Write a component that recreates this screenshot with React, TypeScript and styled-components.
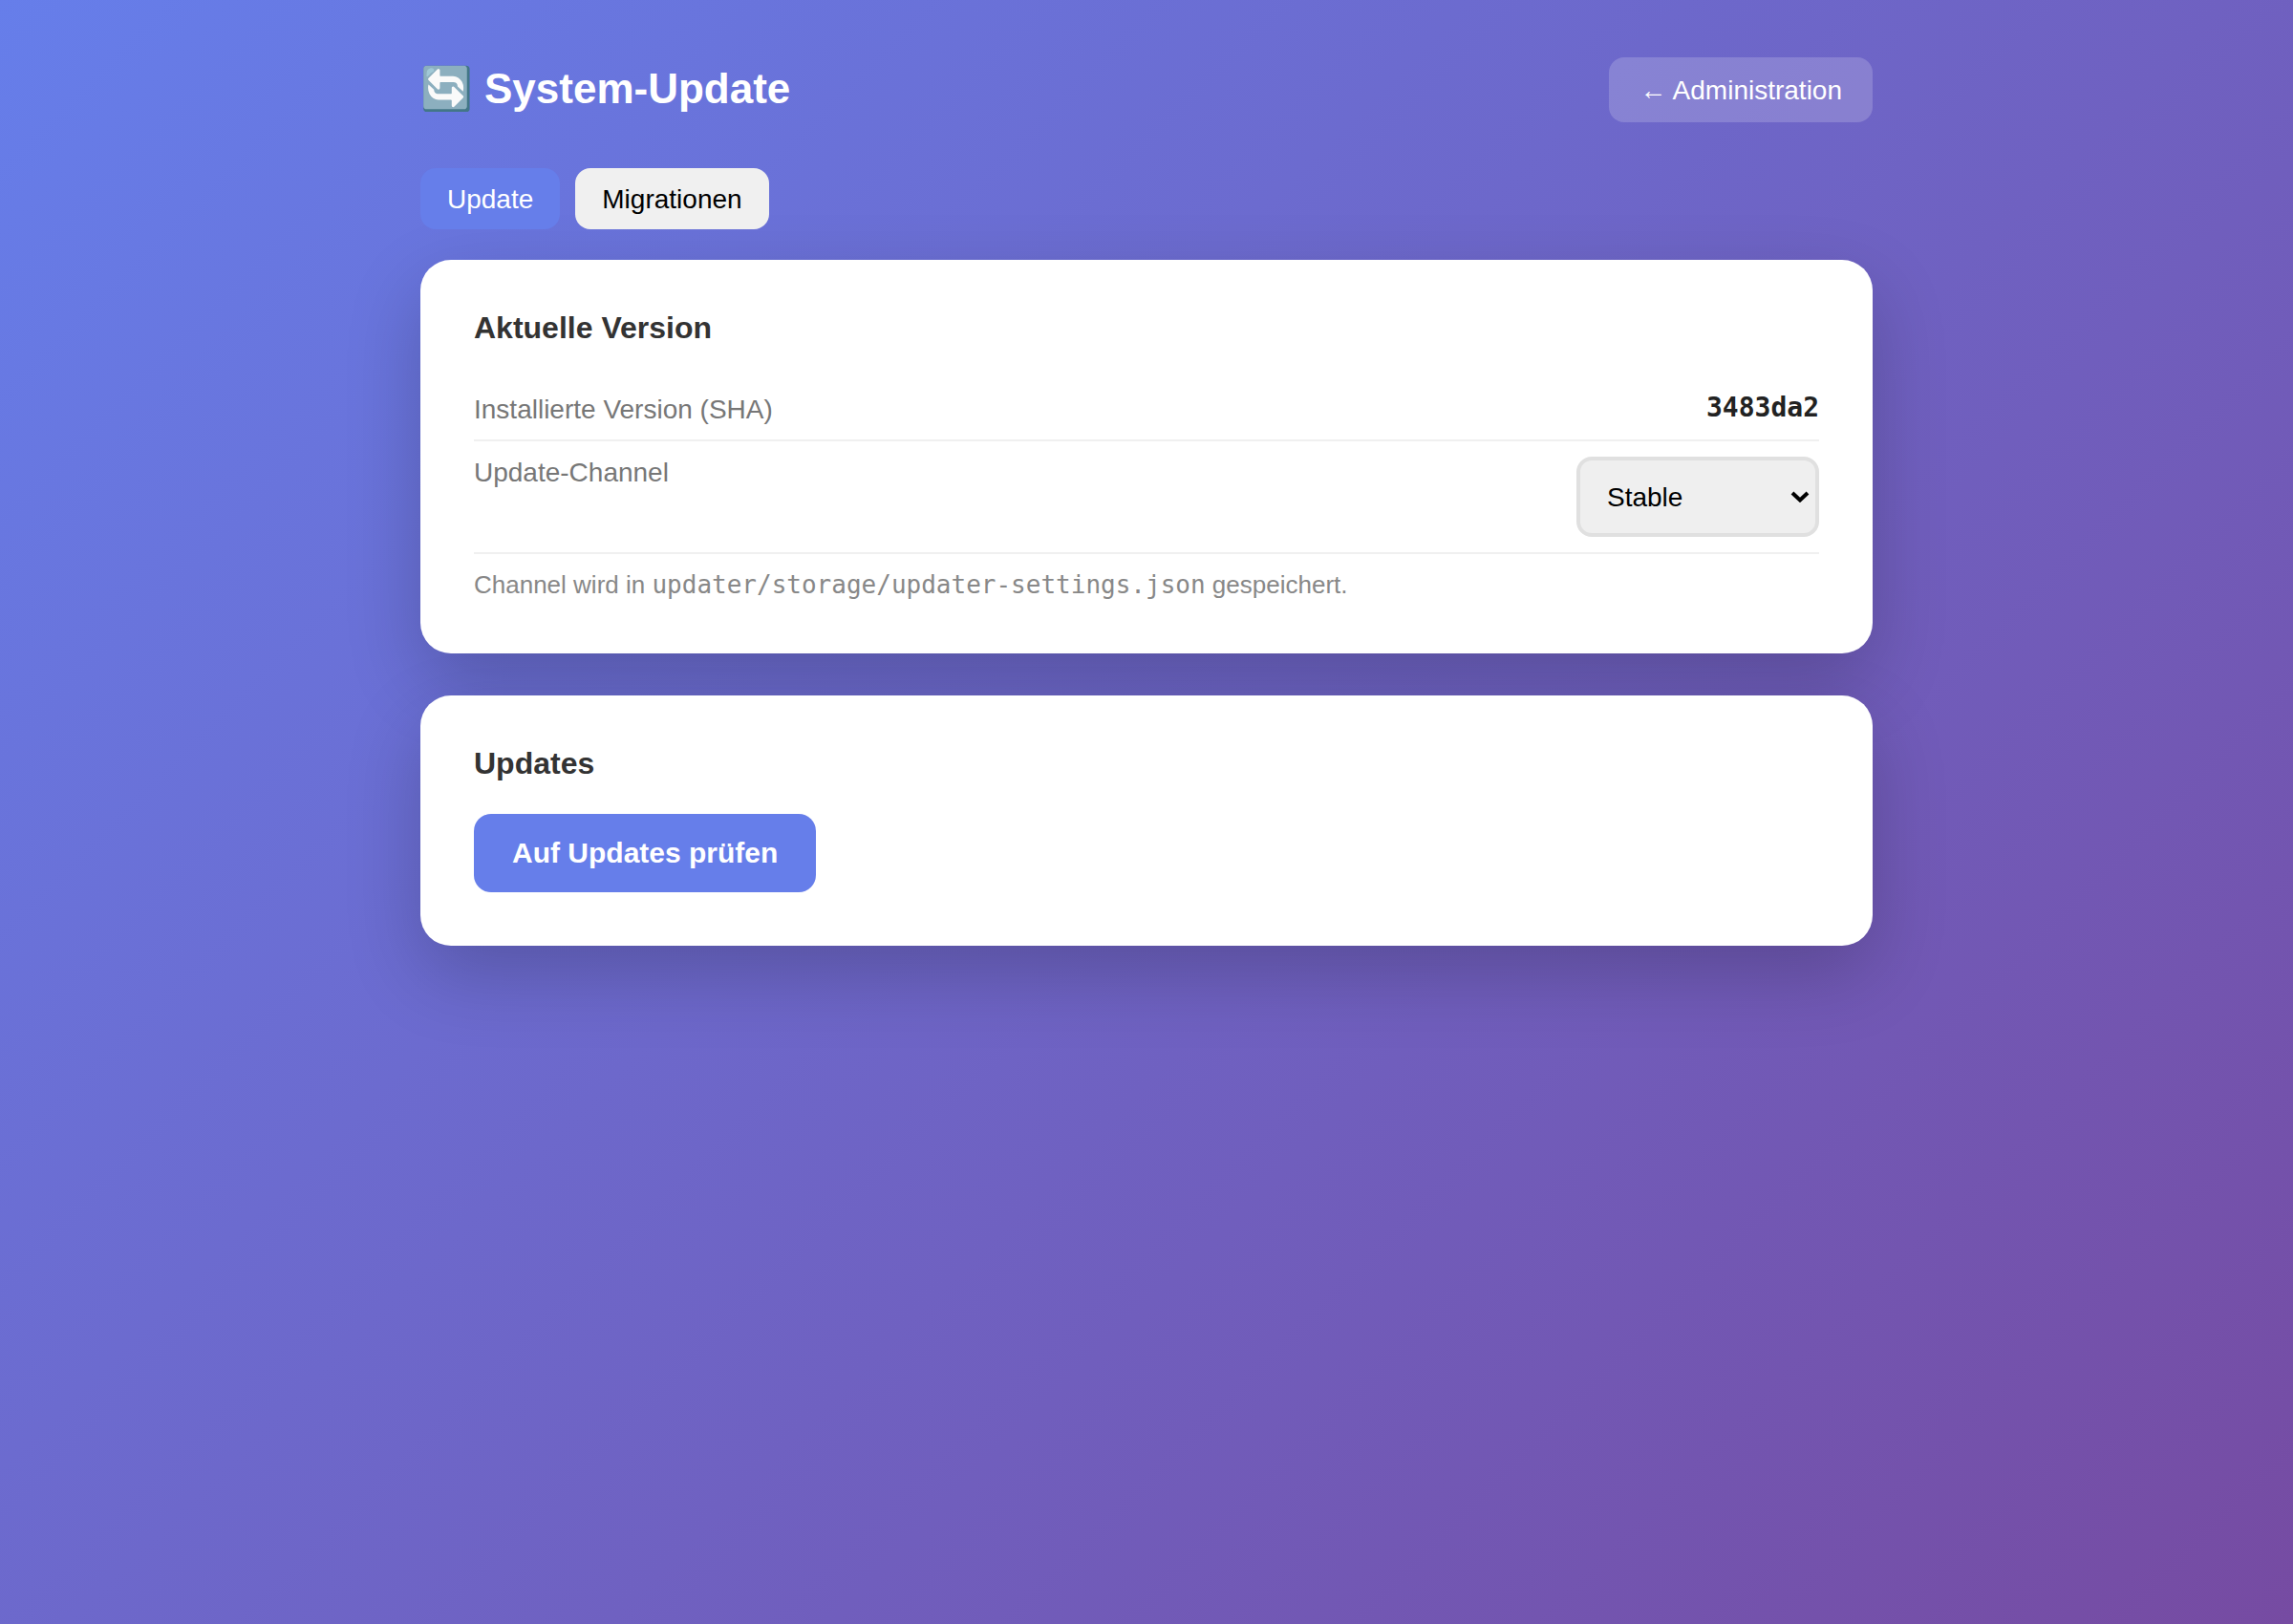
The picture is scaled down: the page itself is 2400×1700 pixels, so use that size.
import React, { useState } from "react";
import styled, { createGlobalStyle } from "styled-components";

const GlobalStyle = createGlobalStyle`
  *, *::before, *::after { box-sizing: border-box; }
  body {
    margin: 0;
    min-height: 100vh;
    padding: 60px 40px;
    background: linear-gradient(135deg, #667eea 0%, #764ba2 100%);
    color: #222;
    font-family: "Liberation Sans", Arial, sans-serif;
    font-size: 28px;
    line-height: 32px;
  }
  button, select { font: inherit; }
`;

const Container = styled.main`
  max-width: 1520px;
  margin: 0 auto;
`;

const Header = styled.header`
  display: flex;
  align-items: center;
  justify-content: space-between;
  gap: 32px;
  margin-bottom: 48px;
`;

const Title = styled.h1`
  margin: 0;
  padding-bottom: 2px;
  color: #fff;
  font-size: 44px;
  line-height: 50px;
  font-family: "Liberation Sans", Arial, "Noto Color Emoji", sans-serif;
`;

const BackLink = styled.a`
  padding: 19px 32px 17px;
  border-radius: 16px;
  background: rgba(255, 255, 255, 0.18);
  color: #fff;
  text-decoration: none;
`;

const Tabs = styled.nav`
  display: flex;
  gap: 16px;
  margin-bottom: 32px;
`;

const Tab = styled.button<{ $active: boolean }>`
  padding: 17px 28px 15px;
  border: 0;
  border-radius: 16px;
  background: ${(p) => (p.$active ? "#667eea" : "#f0f0f0")};
  color: ${(p) => (p.$active ? "#fff" : "#000")};
  cursor: pointer;
`;

const Card = styled.section`
  margin-bottom: 44px;
  padding: 56px;
  border-radius: 32px;
  background: #fff;
  box-shadow: 0 30px 80px rgba(0, 0, 0, 0.2);
`;

const CardTitle = styled.h2`
  margin: 0 0 38px;
  color: #333;
  font-size: 32px;
  line-height: 30px;
`;

const Row = styled.div`
  display: flex;
  align-items: flex-start;
  justify-content: space-between;
  padding: 16px 0;
  border-bottom: 2px solid #f0f0f0;
`;

const RowLabel = styled.label`
  color: #777;
  line-height: 34px;
  margin-bottom: -2px;
`;

const Sha = styled.output`
  font-family: "DejaVu Sans Mono", monospace;
  font-weight: 700;
  line-height: 30px;
`;

const SelectBox = styled.div`
  position: relative;
  display: flex;
`;

const Select = styled.select`
  appearance: none;
  width: 254px;
  padding: 23px 64px 21px 28px;
  border: 4px solid #e0e0e0;
  border-radius: 16px;
  background: #efefef;
  color: #000;
`;

const Chevron = styled.svg`
  position: absolute;
  top: 36px;
  right: 10px;
  width: 20px;
  height: 12px;
  pointer-events: none;
`;

const Note = styled.p`
  margin: 18px 0 2px;
  color: #888;
  font-size: 26px;
  line-height: 28px;
`;

const Code = styled.code`
  font-family: "DejaVu Sans Mono", monospace;
`;

const PrimaryButton = styled.button`
  display: block;
  padding: 24px 40px;
  border: 0;
  border-radius: 18px;
  background: #667eea;
  color: #fff;
  font-size: 30px;
  font-weight: 700;
  line-height: 34px;
  cursor: pointer;
`;

const tabs = ["Update", "Migrationen"];

export default function App() {
  const [active, setActive] = useState(tabs[0]);
  return (
    <>
      <GlobalStyle />
      <Container>
        <Header>
          <Title>🔄 System-Update</Title>
          <BackLink href="#admin">← Administration</BackLink>
        </Header>
        <Tabs>
          {tabs.map((name) => (
            <Tab key={name} type="button" $active={name === active} onClick={() => setActive(name)}>
              {name}
            </Tab>
          ))}
        </Tabs>
        <Card>
          <CardTitle>Aktuelle Version</CardTitle>
          <Row>
            <RowLabel htmlFor="sha">Installierte Version (SHA)</RowLabel>
            <Sha id="sha">3483da2</Sha>
          </Row>
          <Row>
            <RowLabel htmlFor="channel">Update-Channel</RowLabel>
            <SelectBox>
              <Select id="channel" defaultValue="stable">
                <option value="stable">Stable</option>
              </Select>
              <Chevron viewBox="0 0 20 12" aria-hidden="true">
                <path d="M2 2 L10 9.5 L18 2" fill="none" stroke="#000" strokeWidth="4" />
              </Chevron>
            </SelectBox>
          </Row>
          <Note>
            Channel wird in <Code>updater/storage/updater-settings.json</Code> gespeichert.
          </Note>
        </Card>
        <Card>
          <CardTitle>Updates</CardTitle>
          <PrimaryButton type="button">Auf Updates prüfen</PrimaryButton>
        </Card>
      </Container>
    </>
  );
}
